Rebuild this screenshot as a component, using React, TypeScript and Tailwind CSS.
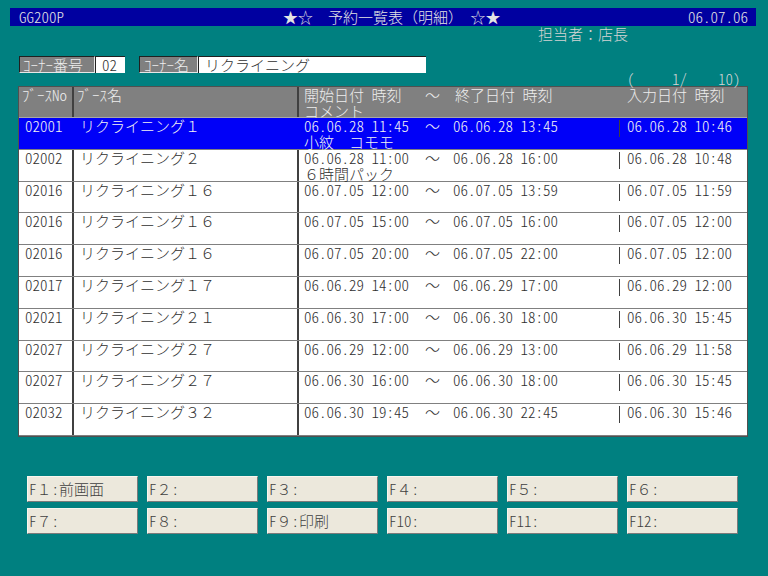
import React from "react";

type R = { no: string; name: string; start: string; end: string; input: string; comment?: string };

const rows: R[] = [
  { no: "02001", name: "リクライニング１", start: "06.06.28 11:45", end: "06.06.28 13:45", input: "06.06.28 10:46", comment: "小紋　コモモ" },
  { no: "02002", name: "リクライニング２", start: "06.06.28 11:00", end: "06.06.28 16:00", input: "06.06.28 10:48", comment: "６時間パック" },
  { no: "02016", name: "リクライニング１６", start: "06.07.05 12:00", end: "06.07.05 13:59", input: "06.07.05 11:59" },
  { no: "02016", name: "リクライニング１６", start: "06.07.05 15:00", end: "06.07.05 16:00", input: "06.07.05 12:00" },
  { no: "02016", name: "リクライニング１６", start: "06.07.05 20:00", end: "06.07.05 22:00", input: "06.07.05 12:00" },
  { no: "02017", name: "リクライニング１７", start: "06.06.29 14:00", end: "06.06.29 17:00", input: "06.06.29 12:00" },
  { no: "02021", name: "リクライニング２１", start: "06.06.30 17:00", end: "06.06.30 18:00", input: "06.06.30 15:45" },
  { no: "02027", name: "リクライニング２７", start: "06.06.29 12:00", end: "06.06.29 13:00", input: "06.06.29 11:58" },
  { no: "02027", name: "リクライニング２７", start: "06.06.30 16:00", end: "06.06.30 18:00", input: "06.06.30 15:45" },
  { no: "02032", name: "リクライニング３２", start: "06.06.30 19:45", end: "06.06.30 22:45", input: "06.06.30 15:46" },
];

const fkeys: [string, string, string][] = [
  ["F", "１", "前画面"], ["F", "２", ""], ["F", "３", ""], ["F", "４", ""], ["F", "５", ""], ["F", "６", ""],
  ["F", "７", ""], ["F", "８", ""], ["F", "９", "印刷"], ["F10", "", ""], ["F11", "", ""], ["F12", "", ""],
];

function Row({ r, selected }: { r: R; selected: boolean }) {
  const bd = selected ? "border-[#0000f8]" : "border-[#404040]";
  return (
    <div
      className={`flex h-[31.8px] border-b border-[#808080] ${selected ? "bg-[#0000f8] text-[#f4f4f4]" : "bg-white text-[#303030]"}`}
    >
      <div className={`w-[55px] shrink-0 border-r-2 ${bd} pl-[6px] leading-[16px] [font-feature-settings:'hwid']`}>{r.no}</div>
      <div className={`w-[225px] shrink-0 border-r-2 ${bd} pl-[6px] leading-[16px]`}>{r.name}</div>
      <div className="flex-1 pl-[5px]">
        <div className="flex h-[16px] leading-[16px]">
          <span className="w-[121px] shrink-0 whitespace-pre [font-feature-settings:'hwid']">{r.start}</span>
          <span className="w-[28px] shrink-0">〜</span>
          <span className="w-[166px] shrink-0 whitespace-pre [font-feature-settings:'hwid']">{r.end}</span>
          <span className="w-[8px] shrink-0 flex items-start pt-[2px]">
            <span className="block w-px h-[17px] bg-[#404040]" />
          </span>
          <span className="whitespace-pre [font-feature-settings:'hwid']">{r.input}</span>
        </div>
        {r.comment && <div className="h-[15px] leading-[15px] whitespace-pre">{r.comment}</div>}
      </div>
    </div>
  );
}

export default function App() {
  return (
    <div className="w-[768px] h-[576px] bg-[#008080] overflow-hidden text-[15px] font-light font-['Noto_Sans_CJK_JP',sans-serif]">
      {/* title bar */}
      <div className="pt-[8px] pl-[10px]">
        <div className="w-[746px] h-[18px] bg-[#0000a0] text-[#e4e4e4] flex items-center leading-[18px]">
          <div className="w-[273px] shrink-0 pl-[9px] [font-feature-settings:'hwid']">GG200P</div>
          <div className="flex-1 whitespace-pre">★☆　予約一覧表（明細）　☆★</div>
          <div className="pr-[8px] [font-feature-settings:'hwid']">06.07.06</div>
        </div>
      </div>
      {/* staff */}
      <div className="h-[16px] pl-[538px] leading-[16px] text-[#d4d4d4]">担当者：店長</div>

      {/* corner fields */}
      <div className="mt-[14px] h-[17px] flex pl-[19px]">
        <div className="w-[76px] h-[17px] bg-[#808080] text-[#eeeeee] border-t border-l border-[#202020] border-b-[#e8e8e8] border-r-[#e8e8e8] border-b border-r leading-[15px] pl-[3px]">
          ｺｰﾅｰ番号
        </div>
        <div className="w-[30px] h-[17px] bg-white text-[#303030] border-t border-l border-[#202020] leading-[15px] pl-[6px] [font-feature-settings:'hwid']">02</div>
        <div className="ml-[14px] w-[59px] h-[17px] bg-[#808080] text-[#eeeeee] border-t border-l border-[#202020] border-b-[#e8e8e8] border-r-[#e8e8e8] border-b border-r leading-[15px] pl-[4px]">
          ｺｰﾅｰ名
        </div>
        <div className="w-[228px] h-[17px] bg-white text-[#303030] border-t border-l border-[#202020] leading-[15px] pl-[6px]">
          リクライニング
        </div>
      </div>

      {/* counter */}
      <div className="h-[13px] flex items-end pl-[627px] text-[#d4d4d4] [font-feature-settings:'hwid']">
        <div className="flex leading-[15px] whitespace-pre">
          <span className="w-[45px]">(</span>
          <span className="w-[46px]">1/</span>
          <span>10)</span>
        </div>
      </div>

      {/* table */}
      <div className="ml-[18px] w-[730px] border border-[#505050] bg-white">
        <div className="flex h-[31px] bg-[#808080] text-[#eeeeee] border-b border-[#a8a8a8]">
          <div className="w-[55px] shrink-0 border-r-2 border-[#404040] pl-[3px] leading-[16px] [font-feature-settings:'hwid']">ﾌﾞｰｽNo</div>
          <div className="w-[225px] shrink-0 border-r-2 border-[#404040] pl-[3px] leading-[16px]">ﾌﾞｰｽ名</div>
          <div className="flex-1 pl-[5px]">
            <div className="flex h-[16px] leading-[16px]">
              <span className="w-[121px] shrink-0 whitespace-pre [font-feature-settings:'hwid']">開始日付 時刻</span>
              <span className="w-[30px] shrink-0">〜</span>
              <span className="w-[172px] shrink-0 whitespace-pre [font-feature-settings:'hwid']">終了日付 時刻</span>
              <span className="whitespace-pre [font-feature-settings:'hwid']">入力日付 時刻</span>
            </div>
            <div className="h-[15px] leading-[15px]">コメント</div>
          </div>
        </div>
        {rows.map((r, i) => (
          <Row key={i} r={r} selected={i === 0} />
        ))}
      </div>

      {/* function keys */}
      <div className="mt-[39px] pl-[27px] grid grid-cols-[repeat(6,111px)] gap-x-[9px] gap-y-[6px]">
        {fkeys.map(([f, n, label], i) => (
          <div
            key={i}
            className="h-[26px] bg-[#ece8dc] text-[#404040] border border-t-[#f8f6ee] border-l-[#f8f6ee] border-b-[#7a7a7a] border-r-[#7a7a7a] pl-[1px] leading-[24px] whitespace-pre flex"
          >
            <span className="[font-feature-settings:'hwid']">{f}</span>
            <span>{n}</span>
            <span className="[font-feature-settings:'hwid']">:</span>
            <span>{label}</span>
          </div>
        ))}
      </div>
    </div>
  );
}
